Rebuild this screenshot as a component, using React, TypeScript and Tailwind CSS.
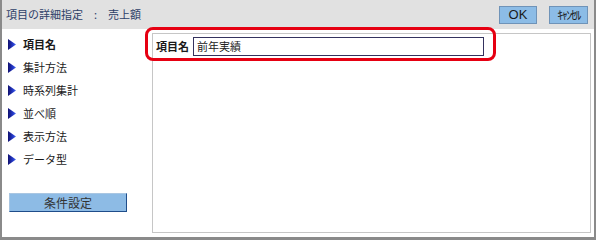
import React from "react";

const NAV_ITEMS = ["項目名", "集計方法", "時系列集計", "並べ順", "表示方法", "データ型"];

const jp = { fontFamily: '"Noto Sans CJK JP", "Noto Sans", sans-serif' };

function Arrow({ id }: { id: string }) {
  return (
    <svg width="8" height="11" viewBox="0 0 8 11" className="shrink-0">
      <defs>
        <linearGradient id={id} x1="0" y1="0" x2="1" y2="0">
          <stop offset="0" stopColor="#101070" />
          <stop offset="0.6" stopColor="#2438c8" />
          <stop offset="1" stopColor="#4a6cf0" />
        </linearGradient>
      </defs>
      <polygon points="0,0 8,5.5 0,11" fill={`url(#${id})`} />
    </svg>
  );
}

export default function App() {
  return (
    <div
      className="relative flex h-[240px] w-[596px] flex-col border-x-2 border-b-[3px] border-[#8a8a8a] bg-white text-[#222]"
      style={jp}
    >
      {/* header */}
      <div className="flex h-[29px] shrink-0 items-center justify-between bg-[#e1e1e1] pl-[4px] pr-[6px]">
        <span className="flex items-center text-[11px] text-[#2e4068]">
          項目の詳細指定
          <span className="mx-[11px]">:</span>
          売上額
        </span>
        <div className="flex items-center gap-[12px]">
          <button className="flex h-[18px] w-[38px] items-center justify-center border border-[#6f93b8] bg-[#8cbce6] font-['Liberation_Sans',sans-serif] text-[13px] leading-none text-[#1a1a1a]">
            OK
          </button>
          <button className="flex h-[18px] w-[39px] items-center justify-center border border-[#6f93b8] bg-[#8cbce6] text-[12px] leading-none tracking-[-1.5px] text-[#1a1a1a]">
            ｷｬﾝｾﾙ
          </button>
        </div>
      </div>

      {/* body */}
      <div className="flex flex-1">
        <div className="flex w-[150px] shrink-0 flex-col pt-[4px]">
          {NAV_ITEMS.map((label, i) => (
            <div key={label} className="flex h-[23px] items-center gap-[7px] pl-[6px]">
              <Arrow id={`arr${i}`} />
              <span className={`text-[11px] text-[#1a1a1a] ${i === 0 ? "font-bold" : ""}`}>{label}</span>
            </div>
          ))}
          <button className="ml-[7px] mt-[22px] flex h-[19px] w-[118px] items-center justify-center border border-[#a9c6e2] border-b-[#1f4d8a] border-r-[#1f4d8a] bg-[#8dbbe5] text-[12px] text-[#333]">
            条件設定
          </button>
        </div>

        <div className="mt-[4px] h-[200px] w-[439px] border border-[#c6c6c6] bg-white pl-[3px] pt-[3px]">
          <div className="flex items-center gap-[4px]">
            <span className="text-[11px] font-bold text-[#1a1a1a]">項目名</span>
            <div className="flex h-[19px] w-[291px] items-center border border-[#34325e] px-[3px] text-[11px] text-[#222]">
              前年実績
            </div>
          </div>
        </div>
      </div>

      {/* highlight annotation */}
      <div className="pointer-events-none absolute left-[143px] top-[27px] h-[34px] w-[351px] rounded-[8px] border-[3px] border-[#e60012]" />
    </div>
  );
}
